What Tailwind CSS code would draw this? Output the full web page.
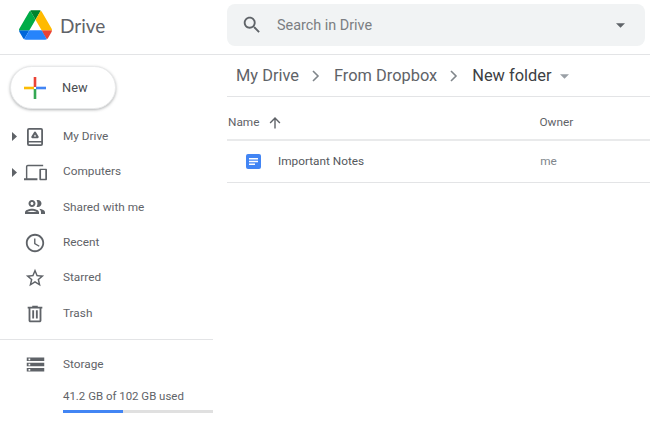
<!doctype html>
<html>
<head>
<meta charset="utf-8">
<script src="https://cdn.jsdelivr.net/npm/@tailwindcss/browser@4"></script>
</head>
<body class="w-[650px] h-[433px] overflow-hidden bg-white font-['Roboto',sans-serif]">
<header class="flex h-[55px] border-b border-[#e3e4e6]">
  <div class="w-[227px] flex items-center pl-[19px] pb-[4px] shrink-0">
    <svg class="w-[33px] h-[30px]" viewBox="0 0 87.3 78"><path d="m6.6 66.85 3.85 6.65c.8 1.4 1.95 2.5 3.3 3.3l13.75-23.8h-27.5c0 1.55.4 3.1 1.2 4.5z" fill="#0066da"/><path d="m43.65 25-13.75-23.8c-1.35.8-2.5 1.9-3.3 3.3l-25.4 44a9.06 9.06 0 0 0 -1.2 4.5h27.5z" fill="#00ac47"/><path d="m73.55 76.8c1.35-.8 2.5-1.9 3.3-3.3l1.6-2.75 7.65-13.25c.8-1.4 1.2-2.95 1.2-4.5h-27.502l5.852 11.5z" fill="#ea4335"/><path d="m43.65 25 13.75-23.8c-1.35-.8-2.9-1.2-4.5-1.2h-18.5c-1.6 0-3.15.45-4.5 1.2z" fill="#00832d"/><path d="m59.8 53h-32.3l-13.75 23.8c1.35.8 2.9 1.2 4.5 1.2h50.8c1.6 0 3.15-.45 4.5-1.2z" fill="#2684fc"/><path d="m73.4 26.5-12.7-22c-.8-1.4-1.95-2.5-3.3-3.3l-13.75 23.8 16.15 28h27.45c0-1.55-.4-3.1-1.2-4.5z" fill="#ffba00"/></svg>
    <span class="ml-[8px] text-[19px] leading-none text-[#5f6368] font-['Lato',sans-serif]">Drive</span>
  </div>
  <div class="mt-[4px] w-[418px] h-[42px] rounded-lg bg-[#f1f3f4] flex items-center pl-[14px] pr-[20px]">
    <svg class="w-[22px] h-[22px]" viewBox="0 0 24 24" fill="#5f6368"><path d="M15.5 14h-.79l-.28-.27C15.41 12.59 16 11.11 16 9.5 16 5.91 13.09 3 9.5 3S3 5.91 3 9.5 5.91 16 9.5 16c1.61 0 3.09-.59 4.23-1.57l.27.28v.79l5 4.99L20.49 19l-4.99-5zm-6 0C7.01 14 5 11.99 5 9.5S7.01 5 9.5 5 14 7.01 14 9.5 11.99 14 9.5 14z"/></svg>
    <span class="ml-[14px] pt-[2px] text-[14.4px] text-[#7b7e82]">Search in Drive</span>
    <svg class="ml-auto w-[9px] h-[5px]" viewBox="0 0 10 5" fill="#5f6368"><path d="M0 0h10L5 5z"/></svg>
  </div>
</header>
<div class="flex">
  <aside class="w-[213px] shrink-0 mr-[14px]">
    <div class="pl-[10px] pt-[11px]">
      <div class="w-[106px] h-[43px] rounded-full bg-white border border-[#e8e9ea] shadow-[0_1px_3px_rgba(60,64,67,0.4)] flex items-center pl-[13px]">
        <svg class="w-[22px] h-[22px]" viewBox="0 0 22 22"><rect x="9.7" y="0" width="2.6" height="10" fill="#ea4335"/><rect x="0" y="9.7" width="10" height="2.6" fill="#fbbc04"/><rect x="12" y="9.7" width="10" height="2.6" fill="#4285f4"/><rect x="9.7" y="12" width="2.6" height="10" fill="#34a853"/></svg>
        <span class="ml-[16px] text-[12.8px] font-[450] text-[#4a4d51]">New</span>
      </div>
    </div>
    <nav class="mt-[10px] text-[11.8px] font-[450] text-[#5f6368]">
      <div class="flex items-center h-[35.4px]">
        <svg class="ml-[12px] w-[5px] h-[9px]" viewBox="0 0 5 9" fill="#5f6368"><path d="M0 0l5 4.5L0 9z"/></svg>
        <div class="w-[36px] mr-[10px] flex justify-center"><svg class="w-[16px] h-[18px]" viewBox="0 0 16 18"><path fill="#5f6368" fill-rule="evenodd" d="M2 0h12a2 2 0 0 1 2 2v14a2 2 0 0 1-2 2H2a2 2 0 0 1-2-2V2a2 2 0 0 1 2-2zm0 1.8a.2.2 0 0 0-.2.2v11h12.400V2a.2.2 0 0 0-.2-.2zM1.800 14.600V16a.2.2 0 0 0 .2.2h12a.2.2 0 0 0 .2-.2v-1.400z"/><path fill="#5f6368" fill-rule="evenodd" d="M8 3.600c.5 0 .8.2 1 .6l2.600 4.400c.4.800-.1 1.600-1 1.600H5.400c-.9 0-1.400-.8-1-1.600L7 4.200c.2-.4.5-.6 1-.6zm0 3L6.800 8.500h2.400z"/></svg></div>
        <span>My Drive</span>
      </div>
      <div class="flex items-center h-[35.4px]">
        <svg class="ml-[12px] w-[5px] h-[9px]" viewBox="0 0 5 9" fill="#5f6368"><path d="M0 0l5 4.5L0 9z"/></svg>
        <div class="w-[36px] mr-[10px] flex justify-center"><svg class="w-[23px] h-[23px]" viewBox="0 0 24 24" fill="#5f6368"><path d="M4 5.500h16V4H4c-1.100 0-2 .9-2 2v12H0v2h14v-2H3.500V6c0-.3.2-.5.5-.5zM23 8h-6c-.55 0-1 .45-1 1v10c0 .55.45 1 1 1h6c.55 0 1-.45 1-1V9c0-.55-.45-1-1-1zm-.8 10.500h-4.400v-9h4.400z"/></svg></div>
        <span>Computers</span>
      </div>
      <div class="flex items-center h-[35.4px]">
        <div class="ml-[17px] w-[36px] mr-[10px] flex justify-center"><svg class="w-[24px] h-[24px]" viewBox="0 0 24 24" fill="#5f6368"><path d="M9 13.75c-2.34 0-7 1.17-7 3.5V19h14v-1.75c0-2.33-4.66-3.5-7-3.5zM4.34 17c.84-.58 2.87-1.25 4.66-1.25s3.82.67 4.66 1.25H4.34zM9 12c1.93 0 3.5-1.57 3.5-3.5S10.93 5 9 5 5.5 6.57 5.5 8.5 7.07 12 9 12zm0-5c.83 0 1.5.67 1.5 1.5S9.83 10 9 10s-1.5-.67-1.5-1.5S8.17 7 9 7zm7.04 6.81c1.16.84 1.96 1.96 1.96 3.44V19h4v-1.75c0-2.02-3.5-3.17-5.96-3.44zM15 12c1.93 0 3.5-1.57 3.5-3.5S16.93 5 15 5c-.54 0-1.04.13-1.5.35.63.89 1 1.98 1 3.15s-.37 2.26-1 3.15c.46.22.96.35 1.5.35z"/></svg></div>
        <span>Shared with me</span>
      </div>
      <div class="flex items-center h-[35.4px]">
        <div class="ml-[17px] w-[36px] mr-[10px] flex justify-center"><svg class="w-[22px] h-[22px]" viewBox="0 0 24 24" fill="#5f6368"><path d="M11.99 2C6.47 2 2 6.48 2 12s4.47 10 9.99 10C17.52 22 22 17.52 22 12S17.52 2 11.99 2zM12 20c-4.42 0-8-3.58-8-8s3.58-8 8-8 8 3.58 8 8-3.58 8-8 8zm.5-13H11v6l5.25 3.15.75-1.23-4.5-2.67z"/></svg></div>
        <span>Recent</span>
      </div>
      <div class="flex items-center h-[35.4px]">
        <div class="ml-[17px] w-[36px] mr-[10px] flex justify-center"><svg class="w-[22px] h-[22px]" viewBox="0 0 24 24" fill="#5f6368"><path d="M22 9.24l-7.19-.62L12 2 9.19 8.63 2 9.24l5.46 4.73L5.82 21 12 17.27 18.18 21l-1.63-7.03L22 9.24zM12 15.4l-3.76 2.27 1-4.28-3.32-2.88 4.38-.38L12 6.1l1.71 4.04 4.38.38-3.32 2.88 1 4.28L12 15.4z"/></svg></div>
        <span>Starred</span>
      </div>
      <div class="flex items-center h-[35.4px]">
        <div class="ml-[17px] w-[36px] mr-[10px] flex justify-center"><svg class="w-[22px] h-[22px]" viewBox="0 0 24 24" fill="#5f6368"><path d="M15 4V3H9v1H4v2h1v13c0 1.1.9 2 2 2h10c1.1 0 2-.9 2-2V6h1V4h-5zm2 15H7V6h10v13zM9 8h2v9H9zm4 0h2v9h-2z"/></svg></div>
        <span>Trash</span>
      </div>
    </nav>
    <div class="mt-[8px] border-t border-[#e3e4e6] pt-[7px]">
      <div class="flex items-center h-[35px] text-[11.8px] font-[450] text-[#5f6368]">
        <div class="ml-[17px] w-[36px] mr-[10px] flex justify-center"><svg class="w-[21px] h-[21px]" viewBox="0 0 24 24" fill="#5f6368"><path d="M2 20h20v-4H2v4zm2-3h2v2H4v-2zM2 4v4h20V4H2zm4 3H4V5h2v2zm-4 7h20v-4H2v4zm2-3h2v2H4v-2z"/></svg></div>
        <span>Storage</span>
      </div>
      <div class="ml-[63px] mt-[7px] text-[11.45px] leading-[14px] text-[#5f6368]">41.2 GB of 102 GB used</div>
      <div class="ml-[63px] mt-[7px] h-[3px] bg-[#e0e0e0]"><div class="w-[60px] h-full bg-[#4285f4]"></div></div>
    </div>
  </aside>
  <main class="flex-1">
    <div class="flex items-center h-[42px] pt-[1px] border-b border-[#e3e4e6] pl-[9px] text-[16.4px] text-[#5f6368]">
      <span>My Drive</span>
      <svg class="ml-[13px] w-[8px] h-[12px]" viewBox="0 0 8 12" fill="none" stroke="#80868b" stroke-width="1.6"><path d="M1 1l5 5-5 5"/></svg>
      <span class="ml-[14px]">From Dropbox</span>
      <svg class="ml-[13px] w-[8px] h-[12px]" viewBox="0 0 8 12" fill="none" stroke="#80868b" stroke-width="1.6"><path d="M1 1l5 5-5 5"/></svg>
      <span class="ml-[14px] text-[#3c4043]">New folder</span>
      <svg class="ml-[8px] w-[9px] h-[5px]" viewBox="0 0 10 5" fill="#9aa0a6"><path d="M0 0h10L5 5z"/></svg>
    </div>
    <div class="flex items-center h-[44px] pt-[10px] border-b-2 border-[#e9eaeb] text-[11.8px] font-[450] text-[#5f6368]">
      <span class="ml-px">Name</span>
      <svg class="ml-[9px] w-[14px] h-[14px]" viewBox="0 0 14 14" fill="#5f6368"><path d="M6.3 12.5V3.700L2.600 7.400 1.600 6.400 7 1l5.400 5.400-1 1-3.700-3.700v8.800z"/></svg>
      <span class="ml-[257px]">Owner</span>
    </div>
    <div class="flex items-center h-[42px] border-b border-[#e3e4e6] text-[11.8px] font-[450] text-[#55585d]">
      <svg class="ml-[19px] w-[15px] h-[15px]" viewBox="0 0 15 15"><rect width="15" height="15" rx="2" fill="#4285f4"/><path d="M3 4h9v1.4H3zM3 6.8h9v1.4H3zM3 9.6h6v1.4H3z" fill="#fff"/></svg>
      <span class="ml-[17px]">Important Notes</span>
      <span class="ml-[176px] font-normal text-[#80868b]">me</span>
    </div>
  </main>
</div>
</body>
</html>
